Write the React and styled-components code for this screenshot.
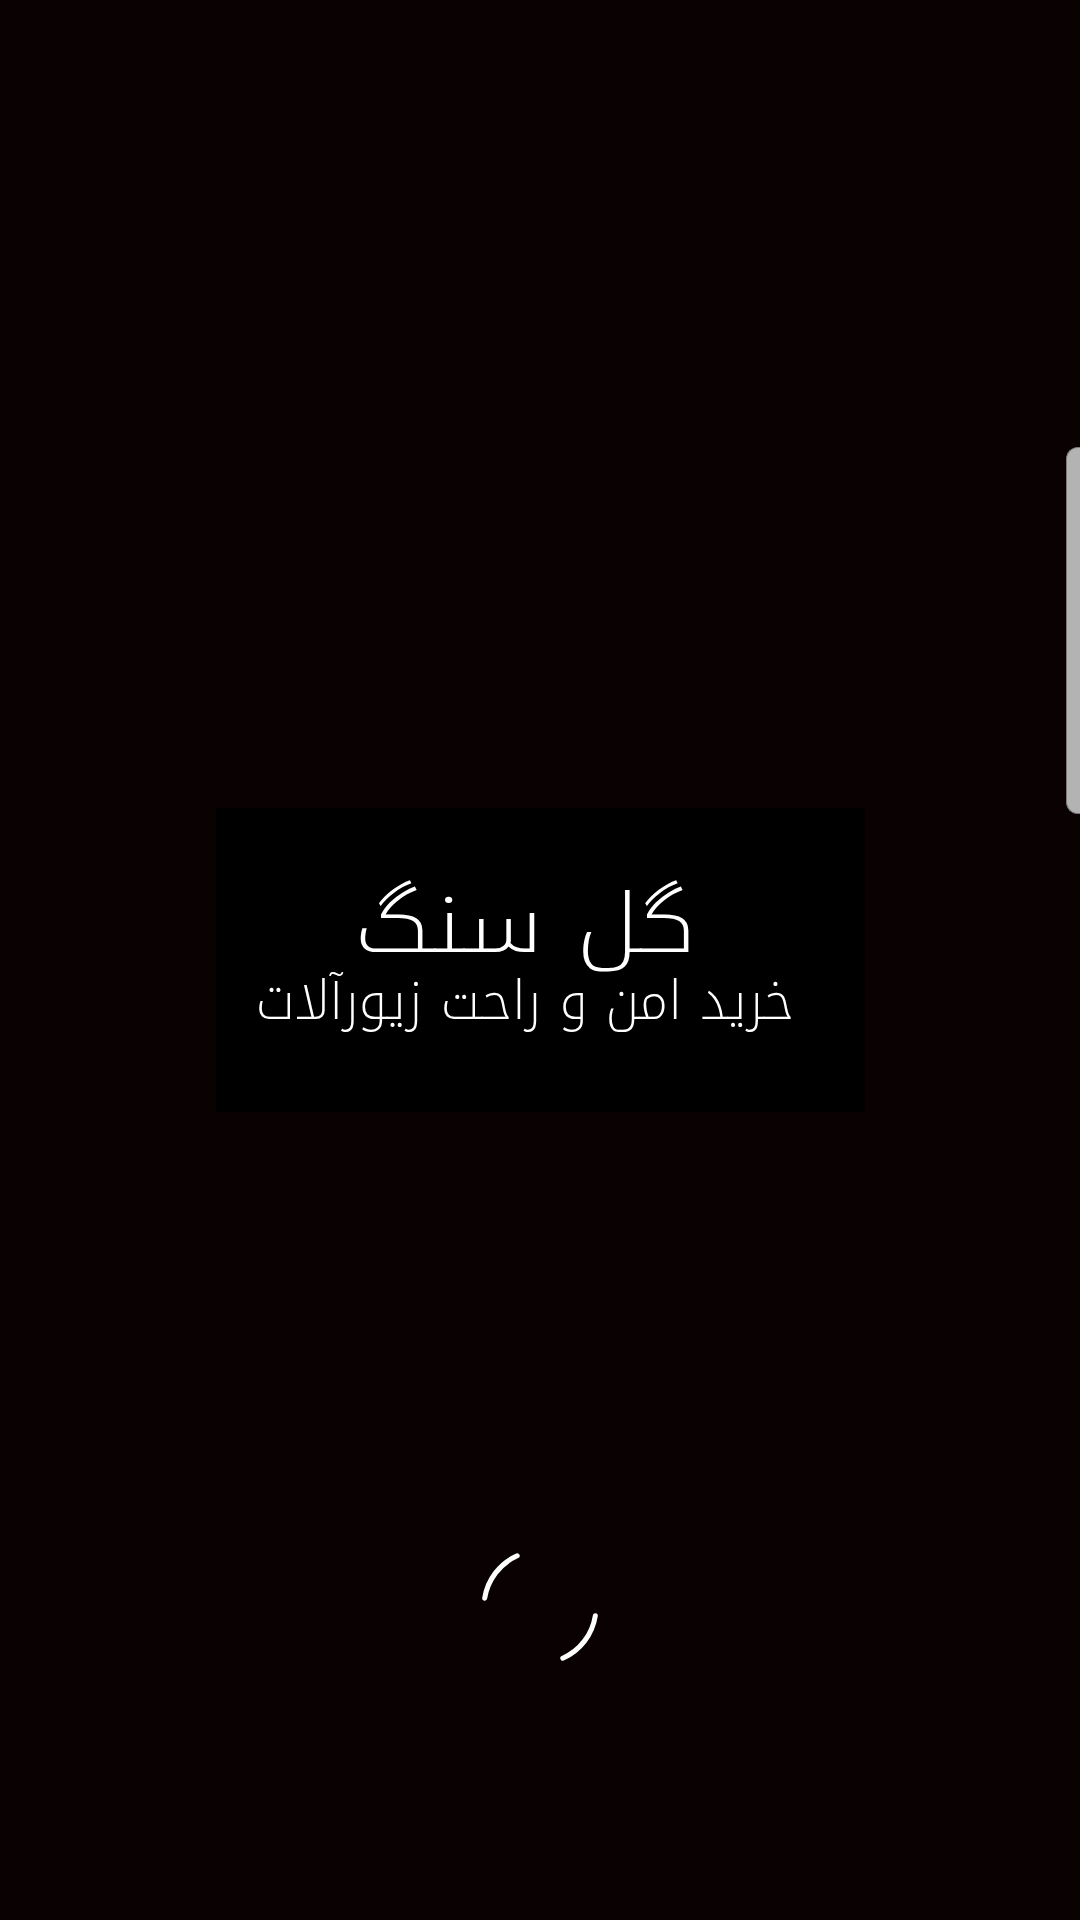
import React from "react";
import styled, { createGlobalStyle } from "styled-components";

const Global = createGlobalStyle`
  html, body { margin: 0; padding: 0; background: #0a0102; }
  body { font-family: "Noto Kufi Arabic", "DejaVu Sans", sans-serif; }
`;

const Page = styled.div`
  position: relative;
  width: 1080px;
  height: 1920px;
  overflow: hidden;
  background: #0a0102;
  display: flex;
  flex-direction: column;
  align-items: center;
  padding-top: 808px;
  box-sizing: border-box;
`;

const Splash = styled.div`
  width: 649px;
  height: 304px;
  padding: 0 30px 4px 0;
  box-sizing: border-box;
  background: #000000;
  display: flex;
  flex-direction: column;
  align-items: center;
  justify-content: center;
  gap: 6px;
  direction: rtl;
  color: #ffffff;
`;

const Title = styled.div`
  font-family: "Noto Kufi Arabic", "DejaVu Sans", sans-serif;
  font-weight: 200;
  font-size: 82px;
  line-height: 80px;
  white-space: nowrap;
  transform: scaleX(1.22);
`;

const Subtitle = styled.div`
  font-family: "Noto Kufi Arabic", "DejaVu Sans", sans-serif;
  font-weight: 200;
  font-size: 54px;
  line-height: 60px;
  white-space: nowrap;
`;

const Spinner = styled.svg`
  margin-top: 425px;
  width: 140px;
  height: 140px;
  display: block;
`;

const ScrollThumb = styled.div`
  position: absolute;
  right: 0;
  top: 447px;
  width: 14px;
  height: 367px;
  background: #b3b3b3;
  border: 1px solid #7a7a7a;
  border-right: none;
  border-radius: 12px 0 0 12px;
  box-sizing: border-box;
`;

export default function App() {
  return (
    <>
      <Global />
      <Page>
        <Splash>
          <Title>گل سنگ</Title>
          <Subtitle>خرید امن و راحت زیورآلات</Subtitle>
        </Splash>
        <Spinner viewBox="0 0 140 140" fill="none" stroke="#ffffff" strokeWidth="5" strokeLinecap="round">
          <path d="M 14.7 61.2 A 56 56 0 0 1 47.2 18.8" />
          <path d="M 125.3 78.8 A 56 56 0 0 1 92.8 121.2" />
        </Spinner>
        <ScrollThumb />
      </Page>
    </>
  );
}
